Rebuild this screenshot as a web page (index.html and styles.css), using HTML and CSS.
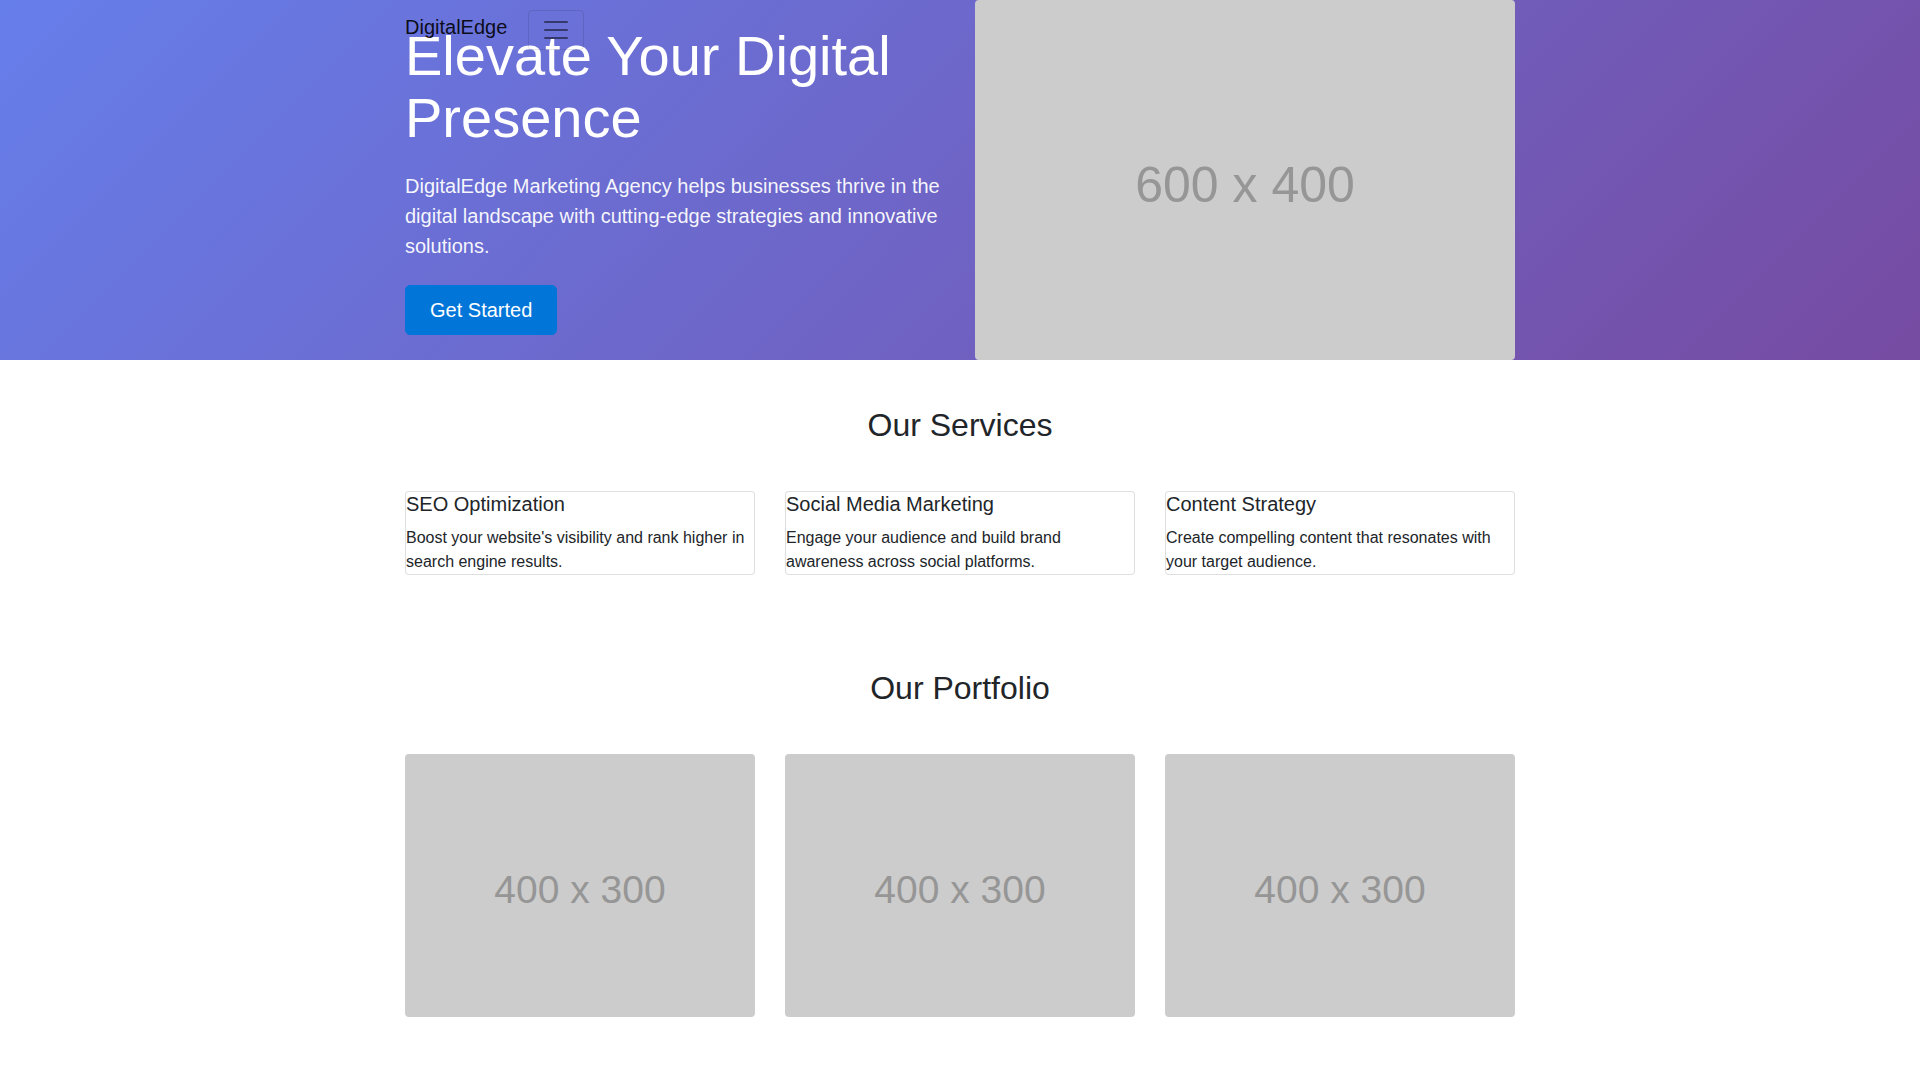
FILE: index.html
```html
<!DOCTYPE html>
<html lang="en">
<head>
<meta charset="utf-8">
<title>DigitalEdge Marketing Agency</title>
<link rel="stylesheet" href="styles.css">
</head>
<body>
<header class="site-header">
  <nav class="navbar">
    <div class="container navbar-inner">
      <a class="brand" href="#">DigitalEdge</a>
      <button class="toggler" type="button" aria-label="Toggle navigation">
        <svg class="toggler-icon" viewBox="0 0 30 30" width="30" height="30">
          <path d="M4 7h22M4 15h22M4 23h22" stroke="rgba(0,0,0,0.5)" stroke-width="2" stroke-linecap="round" stroke-miterlimit="10" fill="none"/>
        </svg>
      </button>
    </div>
  </nav>
  <section class="hero">
    <div class="container">
      <div class="row hero-row">
        <div class="col hero-text">
          <h1 class="hero-title">Elevate Your Digital Presence</h1>
          <p class="lead">DigitalEdge Marketing Agency helps businesses thrive in the digital landscape with cutting-edge strategies and innovative solutions.</p>
          <a class="btn-primary" href="#">Get Started</a>
        </div>
        <div class="col">
          <div class="ph ph-hero"><span>600 x 400</span></div>
        </div>
      </div>
    </div>
  </section>
</header>

<section class="section">
  <div class="container">
    <h2 class="section-title">Our Services</h2>
    <div class="row">
      <div class="col">
        <div class="card">
          <h5 class="card-title">SEO Optimization</h5>
          <p class="card-text">Boost your website's visibility and rank higher in search engine results.</p>
        </div>
      </div>
      <div class="col">
        <div class="card">
          <h5 class="card-title">Social Media Marketing</h5>
          <p class="card-text">Engage your audience and build brand awareness across social platforms.</p>
        </div>
      </div>
      <div class="col">
        <div class="card">
          <h5 class="card-title">Content Strategy</h5>
          <p class="card-text">Create compelling content that resonates with your target audience.</p>
        </div>
      </div>
    </div>
  </div>
</section>

<section class="section">
  <div class="container">
    <h2 class="section-title">Our Portfolio</h2>
    <div class="row">
      <div class="col"><div class="ph ph-port"><span>400 x 300</span></div></div>
      <div class="col"><div class="ph ph-port"><span>400 x 300</span></div></div>
      <div class="col"><div class="ph ph-port"><span>400 x 300</span></div></div>
    </div>
  </div>
</section>
</body>
</html>
```

FILE: styles.css
```css
* { box-sizing: border-box; }

html, body {
  margin: 0;
  padding: 0;
}

body {
  font-family: "Liberation Sans", Arial, Helvetica, sans-serif;
  font-size: 16px;
  line-height: 1.5;
  color: #212529;
  background: #fff;
}

.container {
  width: 1140px;
  margin: 0 auto;
  padding: 0 15px;
}

.row {
  display: flex;
  margin: 0 -15px;
}

.col {
  flex: 1 1 0;
  min-width: 0;
  padding: 0 15px;
}

/* Header / navbar */
.site-header {
  position: relative;
}

.navbar {
  position: absolute;
  top: 0;
  left: 0;
  right: 0;
  z-index: 2;
  padding: 8px 0;
}

.navbar-inner {
  display: flex;
  align-items: center;
}

.brand {
  display: inline-block;
  padding: 3px 0 7px;
  margin-right: 21px;
  font-size: 20px;
  line-height: 30px;
  color: rgba(0, 0, 0, 0.9);
  text-decoration: none;
  white-space: nowrap;
}

.toggler {
  display: flex;
  align-items: center;
  justify-content: center;
  padding: 4px 12px;
  margin-top: 2px;
  background: transparent;
  border: 1px solid rgba(0, 0, 0, 0.1);
  border-radius: 4px;
  line-height: 1;
}

.toggler-icon {
  display: block;
  width: 30px;
  height: 30px;
}

/* Hero */
.hero {
  background: linear-gradient(135deg, #667eea 0%, #764ba2 100%);
  color: #fff;
}

.hero-row {
  align-items: center;
}

.hero-title {
  margin: 0 0 22px;
  font-size: 56px;
  font-weight: 400;
  line-height: 62px;
  color: #fff;
}

.lead {
  margin: 0 0 24px;
  font-size: 20px;
  line-height: 30px;
  color: rgba(255, 255, 255, 0.95);
}

.btn-primary {
  display: inline-block;
  padding: 9px 24px;
  font-size: 20px;
  line-height: 30px;
  color: #fff;
  background: #0275d8;
  border: 1px solid #0275d8;
  border-radius: 5px;
  text-decoration: none;
}

/* Placeholders */
.ph {
  display: flex;
  align-items: center;
  justify-content: center;
  background: #cccccc;
  color: #969696;
  border-radius: 4px;
  line-height: normal;
  white-space: nowrap;
}

.ph-hero {
  width: 540px;
  height: 360px;
  font-size: 50px;
  padding-top: 10px;
}

.ph-port {
  width: 350px;
  height: 262.5px;
  font-size: 39px;
  padding-top: 9px;
}

/* Sections */
.section {
  padding: 48px 0;
}

.section-title {
  margin: 0 0 48px;
  text-align: center;
  font-size: 32px;
  font-weight: 400;
  line-height: 1.1;
  color: #212529;
}

.card {
  background: #fff;
  border: 1px solid rgba(0, 0, 0, 0.125);
  border-radius: 4px;
}

.card-title {
  margin: 0 0 10px;
  font-size: 20px;
  font-weight: 400;
  line-height: 1.2;
}

.card-text {
  margin: 0;
  font-size: 16px;
  line-height: 1.5;
}
```
